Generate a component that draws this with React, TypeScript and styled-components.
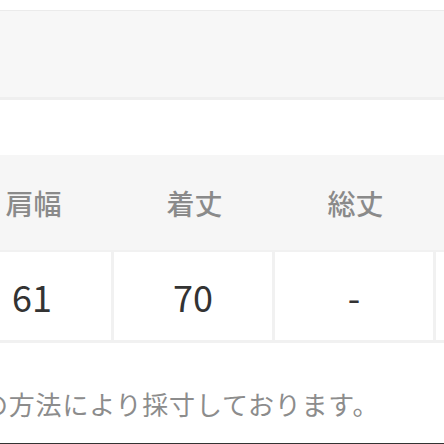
import React, { FC } from 'react';
import styled, { createGlobalStyle } from 'styled-components';

const GlobalStyle = createGlobalStyle`
  html, body {
    margin: 0;
    padding: 0;
    background: #fff;
    overflow: hidden;
  }
  body {
    font-family: "Noto Sans CJK JP", "Noto Sans", sans-serif;
  }
`;

const columns = [
  { label: '肩幅', value: '61' },
  { label: '着丈', value: '70' },
  { label: '総丈', value: '-' },
  { label: '', value: '' },
];

const App: FC = () => {
  return (
    <Page>
      <GlobalStyle />
      <Band />
      <SizeTable>
        {columns.map((col, i) => (
          <HeadCell key={`h${i}`}>{col.label}</HeadCell>
        ))}
        {columns.map((col, i) => (
          <DataCell key={`d${i}`}>{col.value}</DataCell>
        ))}
      </SizeTable>
      <Note>の方法により採寸しております。</Note>
      <Footer />
    </Page>
  );
};

export default App;

const Page = styled.div`
  width: 444px;
  height: 444px;
  overflow: hidden;
  display: flex;
  flex-direction: column;
`;

const Band = styled.div`
  margin-top: 10px;
  height: 86px;
  background-color: #f7f7f7;
  border-top: 1px solid #ebebeb;
  border-bottom: 3px solid #efefef;
  flex-shrink: 0;
`;

const SizeTable = styled.div`
  margin-top: 55px;
  margin-left: -47px;
  display: grid;
  grid-template-columns: repeat(4, 158px);
  grid-template-rows: 95px 88px;
  column-gap: 3px;
  row-gap: 2px;
  background-color: #f1f1f1;
  padding-bottom: 3px;
  width: max-content;
  flex-shrink: 0;
`;

const HeadCell = styled.div`
  background-color: #f6f6f6;
  margin-right: -3px;
  display: flex;
  align-items: center;
  justify-content: center;
  font-size: 28px;
  font-weight: 500;
  color: #8a8a8a;
`;

const DataCell = styled.div`
  background-color: #fff;
  display: flex;
  align-items: center;
  justify-content: center;
  font-size: 36px;
  color: #333;
`;

const Note = styled.p`
  margin: 0;
  padding-top: 43px;
  margin-left: -18px;
  font-size: 26px;
  line-height: 36px;
  letter-spacing: 0.8px;
  color: #8c8c8c;
  white-space: nowrap;
  flex: 1;
`;

const Footer = styled.div`
  height: 1px;
  background-color: #333;
  flex-shrink: 0;
`;
